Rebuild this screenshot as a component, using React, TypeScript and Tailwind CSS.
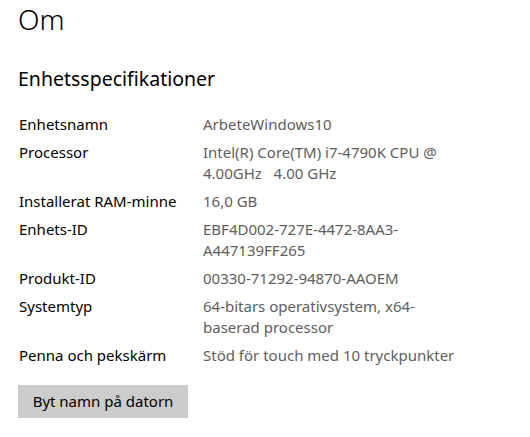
import React from 'react';

const specs: { label: string; value: string[] }[] = [
  { label: 'Enhetsnamn', value: ['ArbeteWindows10'] },
  { label: 'Processor', value: ['Intel(R) Core(TM) i7-4790K CPU @', '4.00GHz   4.00 GHz'] },
  { label: 'Installerat RAM-minne', value: ['16,0 GB'] },
  { label: 'Enhets-ID', value: ['EBF4D002-727E-4472-8AA3-', 'A447139FF265'] },
  { label: 'Produkt-ID', value: ['00330-71292-94870-AAOEM'] },
  { label: 'Systemtyp', value: ['64-bitars operativsystem, x64-', 'baserad processor'] },
  { label: 'Penna och pekskärm', value: ['Stöd för touch med 10 tryckpunkter'] },
];

const App: React.FC = () => {
  return (
    <div className="w-[530px] h-[437px] bg-white overflow-hidden pl-[18px] font-['Noto_Sans','Open_Sans',sans-serif]">
      <h1 className="text-[28px] leading-[36px] font-light text-black pt-[1px]">Om</h1>

      <h2 className="mt-[28px] text-[19.5px] leading-[28px] text-black">Enhetsspecifikationer</h2>

      <div className="mt-[21px] grid grid-cols-[184px_1fr] gap-y-[7px] text-[15px] leading-[21px] pl-[1px]">
        {specs.map((s) => (
          <React.Fragment key={s.label}>
            <div className="text-black whitespace-nowrap">{s.label}</div>
            <div className="text-[#5e5e5e]">
              {s.value.map((line, i) => (
                <div key={i} className="whitespace-pre">{line}</div>
              ))}
            </div>
          </React.Fragment>
        ))}
      </div>

      <button className="mt-[19px] w-[170px] h-[33px] bg-[#cccccc] text-[15px] text-black">
        Byt namn på datorn
      </button>
    </div>
  );
};

export default App;
